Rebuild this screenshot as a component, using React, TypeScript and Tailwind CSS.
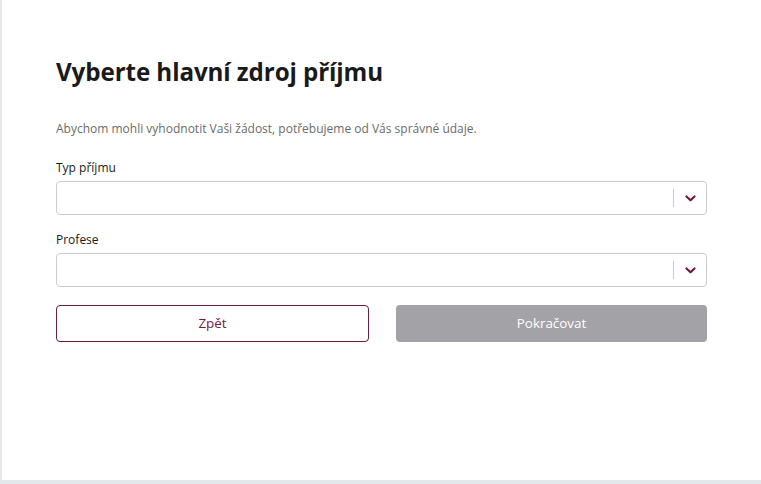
import React from "react";

function Chevron() {
  return (
    <svg width="11" height="7" viewBox="0 0 11 7" fill="none">
      <path d="M1.5 1.5L5.5 5.3L9.5 1.5" stroke="#6e1a45" strokeWidth="2.2" strokeLinecap="round" strokeLinejoin="round" />
    </svg>
  );
}

function Select() {
  return (
    <div className="h-[34px] w-full rounded-[4px] border border-[#cccccc] bg-white flex items-center justify-end">
      <div className="w-px h-[18px] bg-[#cccccc]" />
      <div className="w-[32px] flex items-center justify-center">
        <Chevron />
      </div>
    </div>
  );
}

export default function App() {
  return (
    <div className="w-[761px] h-[484px] bg-[#e3e8eb] pl-[2px] pb-[4px]" style={{ fontFamily: '"Open Sans", "Noto Sans", sans-serif' }}>
      <div className="w-full h-full bg-white pl-[54px] pr-[54px] pt-[56px]">
        <h1 className="text-[24.2px] leading-[32px] font-bold text-[#1a1a1a] tracking-[-0.1px]">Vyberte hlavní zdroj příjmu</h1>
        <p className="mt-[32px] text-[12px] leading-[18px] text-[#6b6b6b]">Abychom mohli vyhodnotit Vaši žádost, potřebujeme od Vás správné údaje.</p>
        <div className="mt-[21px] text-[12px] leading-[18px] font-medium text-[#1a1a1a]">Typ příjmu</div>
        <div className="mt-[4px]"><Select /></div>
        <div className="mt-[16px] text-[12px] leading-[18px] font-medium text-[#1a1a1a]">Profese</div>
        <div className="mt-[4px]"><Select /></div>
        <div className="mt-[18px] flex gap-[27px]">
          <button className="flex-1 h-[37px] rounded-[4px] border border-[#6e1a45] bg-white text-[13.4px] text-[#6e1a45]">Zpět</button>
          <button className="flex-1 h-[37px] rounded-[4px] bg-[#a3a2a7] text-[13.4px] text-white">Pokračovat</button>
        </div>
      </div>
    </div>
  );
}
